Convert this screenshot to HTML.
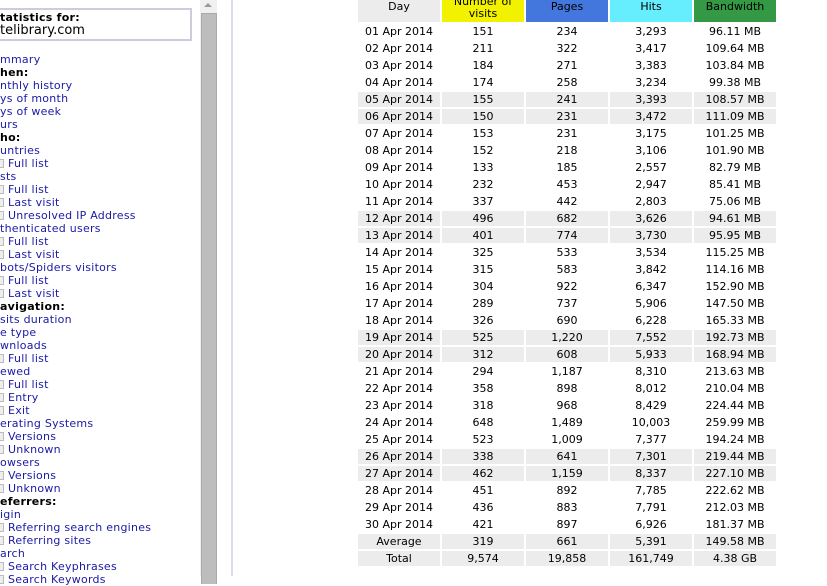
<!DOCTYPE html>
<html><head><meta charset="utf-8"><style>
body{margin:0;width:827px;height:576px;overflow:hidden;background:#fff;font-family:"DejaVu Sans","Liberation Sans",sans-serif;font-size:11px;position:relative}
.sb{position:absolute;left:0;top:0;width:200px}
.l{position:absolute;left:0;white-space:nowrap;line-height:13px;color:#1a1aa6;letter-spacing:0.25px}
.b{color:#000;font-weight:bold}
.i{display:inline-block;width:5px;height:7px;border:1px solid #bbb;background:#eee;margin-left:-3px;margin-right:4px;vertical-align:-1px}
.box{position:absolute;left:-10px;top:8px;width:198px;height:29px;border:2px solid #ccccdd}
.track{position:absolute;left:200px;top:0;width:17px;height:576px;background:#f0f0f0}
.thumb{position:absolute;left:201px;top:13px;width:14px;height:570px;background:#bdbdbd;border:1px solid #aaa;border-bottom:none}
.arr{position:absolute;left:204px;top:3px;width:0;height:0;border-left:4px solid transparent;border-right:4px solid transparent;border-bottom:4px solid #999}
.vl{position:absolute;left:231px;top:0;width:2px;height:576px;background:#dcdce8}
table{position:absolute;left:356px;top:-10px;border-collapse:separate;border-spacing:2px}
td{width:82px;height:15px;padding:0;text-align:center;line-height:15px;white-space:nowrap;color:#000}
th{height:30px;padding:0;font-weight:normal;line-height:12px;vertical-align:middle;box-sizing:border-box}
th.v{vertical-align:bottom;padding-bottom:2px}
tr.s td{background:#ececec}
</style></head><body>
<div class="box"></div>
<div class="sb">
<div class="l b" style="top:11px">tatistics for:</div>
<div class="l" style="top:24px;color:#000;font-size:13px;letter-spacing:0">telibrary.com</div>
<div class="l" style="top:53px">mmary</div>
<div class="l b" style="top:66px">hen:</div>
<div class="l" style="top:79px">nthly history</div>
<div class="l" style="top:92px">ys of month</div>
<div class="l" style="top:105px">ys of week</div>
<div class="l" style="top:118px">urs</div>
<div class="l b" style="top:131px">ho:</div>
<div class="l" style="top:144px">untries</div>
<div class="l" style="top:157px"><span class="i"></span>Full list</div>
<div class="l" style="top:170px">sts</div>
<div class="l" style="top:183px"><span class="i"></span>Full list</div>
<div class="l" style="top:196px"><span class="i"></span>Last visit</div>
<div class="l" style="top:209px"><span class="i"></span>Unresolved IP Address</div>
<div class="l" style="top:222px">thenticated users</div>
<div class="l" style="top:235px"><span class="i"></span>Full list</div>
<div class="l" style="top:248px"><span class="i"></span>Last visit</div>
<div class="l" style="top:261px">bots/Spiders visitors</div>
<div class="l" style="top:274px"><span class="i"></span>Full list</div>
<div class="l" style="top:287px"><span class="i"></span>Last visit</div>
<div class="l b" style="top:300px">avigation:</div>
<div class="l" style="top:313px">sits duration</div>
<div class="l" style="top:326px">e type</div>
<div class="l" style="top:339px">wnloads</div>
<div class="l" style="top:352px"><span class="i"></span>Full list</div>
<div class="l" style="top:365px">ewed</div>
<div class="l" style="top:378px"><span class="i"></span>Full list</div>
<div class="l" style="top:391px"><span class="i"></span>Entry</div>
<div class="l" style="top:404px"><span class="i"></span>Exit</div>
<div class="l" style="top:417px">erating Systems</div>
<div class="l" style="top:430px"><span class="i"></span>Versions</div>
<div class="l" style="top:443px"><span class="i"></span>Unknown</div>
<div class="l" style="top:456px">owsers</div>
<div class="l" style="top:469px"><span class="i"></span>Versions</div>
<div class="l" style="top:482px"><span class="i"></span>Unknown</div>
<div class="l b" style="top:495px">eferrers:</div>
<div class="l" style="top:508px">igin</div>
<div class="l" style="top:521px"><span class="i"></span>Referring search engines</div>
<div class="l" style="top:534px"><span class="i"></span>Referring sites</div>
<div class="l" style="top:547px">arch</div>
<div class="l" style="top:560px"><span class="i"></span>Search Keyphrases</div>
<div class="l" style="top:573px"><span class="i"></span>Search Keywords</div>
</div>
<div class="track"></div><div class="thumb"></div><div class="arr"></div>
<div class="vl"></div>
<table>
<tr><th style="background:#ececec">Day</th><th class="v" style="background:#f2f200">Number of<br>visits</th><th style="background:#4477dd">Pages</th><th style="background:#66eeff">Hits</th><th style="background:#339944">Bandwidth</th></tr>
<tr><td>01 Apr 2014</td><td>151</td><td>234</td><td>3,293</td><td>96.11 MB</td></tr>
<tr><td>02 Apr 2014</td><td>211</td><td>322</td><td>3,417</td><td>109.64 MB</td></tr>
<tr><td>03 Apr 2014</td><td>184</td><td>271</td><td>3,383</td><td>103.84 MB</td></tr>
<tr><td>04 Apr 2014</td><td>174</td><td>258</td><td>3,234</td><td>99.38 MB</td></tr>
<tr class="s"><td>05 Apr 2014</td><td>155</td><td>241</td><td>3,393</td><td>108.57 MB</td></tr>
<tr class="s"><td>06 Apr 2014</td><td>150</td><td>231</td><td>3,472</td><td>111.09 MB</td></tr>
<tr><td>07 Apr 2014</td><td>153</td><td>231</td><td>3,175</td><td>101.25 MB</td></tr>
<tr><td>08 Apr 2014</td><td>152</td><td>218</td><td>3,106</td><td>101.90 MB</td></tr>
<tr><td>09 Apr 2014</td><td>133</td><td>185</td><td>2,557</td><td>82.79 MB</td></tr>
<tr><td>10 Apr 2014</td><td>232</td><td>453</td><td>2,947</td><td>85.41 MB</td></tr>
<tr><td>11 Apr 2014</td><td>337</td><td>442</td><td>2,803</td><td>75.06 MB</td></tr>
<tr class="s"><td>12 Apr 2014</td><td>496</td><td>682</td><td>3,626</td><td>94.61 MB</td></tr>
<tr class="s"><td>13 Apr 2014</td><td>401</td><td>774</td><td>3,730</td><td>95.95 MB</td></tr>
<tr><td>14 Apr 2014</td><td>325</td><td>533</td><td>3,534</td><td>115.25 MB</td></tr>
<tr><td>15 Apr 2014</td><td>315</td><td>583</td><td>3,842</td><td>114.16 MB</td></tr>
<tr><td>16 Apr 2014</td><td>304</td><td>922</td><td>6,347</td><td>152.90 MB</td></tr>
<tr><td>17 Apr 2014</td><td>289</td><td>737</td><td>5,906</td><td>147.50 MB</td></tr>
<tr><td>18 Apr 2014</td><td>326</td><td>690</td><td>6,228</td><td>165.33 MB</td></tr>
<tr class="s"><td>19 Apr 2014</td><td>525</td><td>1,220</td><td>7,552</td><td>192.73 MB</td></tr>
<tr class="s"><td>20 Apr 2014</td><td>312</td><td>608</td><td>5,933</td><td>168.94 MB</td></tr>
<tr><td>21 Apr 2014</td><td>294</td><td>1,187</td><td>8,310</td><td>213.63 MB</td></tr>
<tr><td>22 Apr 2014</td><td>358</td><td>898</td><td>8,012</td><td>210.04 MB</td></tr>
<tr><td>23 Apr 2014</td><td>318</td><td>968</td><td>8,429</td><td>224.44 MB</td></tr>
<tr><td>24 Apr 2014</td><td>648</td><td>1,489</td><td>10,003</td><td>259.99 MB</td></tr>
<tr><td>25 Apr 2014</td><td>523</td><td>1,009</td><td>7,377</td><td>194.24 MB</td></tr>
<tr class="s"><td>26 Apr 2014</td><td>338</td><td>641</td><td>7,301</td><td>219.44 MB</td></tr>
<tr class="s"><td>27 Apr 2014</td><td>462</td><td>1,159</td><td>8,337</td><td>227.10 MB</td></tr>
<tr><td>28 Apr 2014</td><td>451</td><td>892</td><td>7,785</td><td>222.62 MB</td></tr>
<tr><td>29 Apr 2014</td><td>436</td><td>883</td><td>7,791</td><td>212.03 MB</td></tr>
<tr><td>30 Apr 2014</td><td>421</td><td>897</td><td>6,926</td><td>181.37 MB</td></tr>
<tr class="s"><td>Average</td><td>319</td><td>661</td><td>5,391</td><td>149.58 MB</td></tr>
<tr class="s"><td>Total</td><td>9,574</td><td>19,858</td><td>161,749</td><td>4.38 GB</td></tr>
</table>
</body></html>
